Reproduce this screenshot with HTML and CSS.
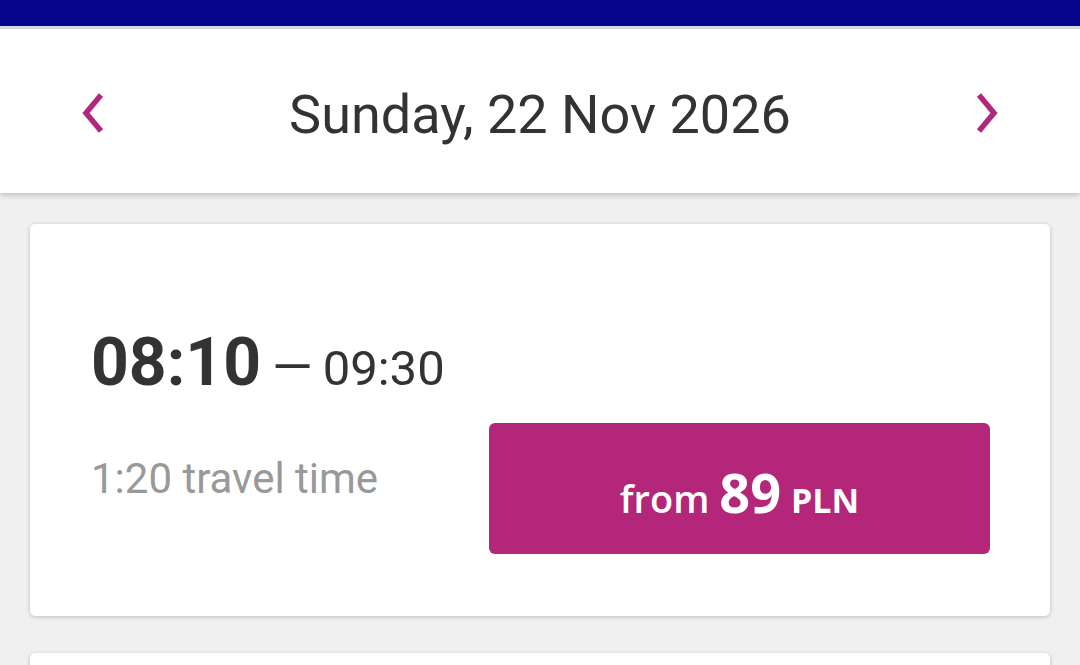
FILE: index.html
```html
<!DOCTYPE html>
<html>
<head>
<meta charset="utf-8">
<title>Connections</title>
<link rel="stylesheet" href="styles.css">
</head>
<body>

<div class="topbar"></div>

<div class="dayhead">
	<button class="nav prev" aria-label="previous day">
		<svg width="26" height="44" viewBox="0 0 26 44"><path d="M21 4 L6 22 L21 40" fill="none" stroke="#b0287e" stroke-width="5.5"/></svg>
	</button>
	<div class="date">Sunday, 22 Nov 2026</div>
	<button class="nav next" aria-label="next day">
		<svg width="26" height="44" viewBox="0 0 26 44"><path d="M5 4 L20 22 L5 40" fill="none" stroke="#b0287e" stroke-width="5.5"/></svg>
	</button>
</div>

<div id="main">
	<div class="trip">
		<div class="times"><span class="dep">08:10</span><span class="dash">—</span><span class="arr">09:30</span></div>
		<div class="row">
			<div class="dur">1:20 travel time</div>
			<button class="price">from <b>89</b> <span class="cur">PLN</span></button>
		</div>
	</div>
	<div class="trip"></div>
</div>

</body>
</html>
```

FILE: styles.css
```css
body {
	margin: 0;
	background-color: #f0f0f0;
	font-family: Roboto, "Liberation Sans", sans-serif;
	color: #333;
	overflow: hidden;
}
.topbar {
	height: 26px;
	background-color: #05058a;
	border-bottom: 3px solid #dcdcea;
}
.dayhead {
	height: 164px;
	background-color: #fff;
	display: flex;
	align-items: center;
	justify-content: space-between;
	padding: 0 80px 0 80px;
	box-shadow: 0 2px 6px rgba(0, 0, 0, .22);
	position: relative;
}
.nav {
	border: none;
	background: none;
	padding: 0;
	width: 26px;
	height: 44px;
	margin-top: 4px;
}
.nav svg {
	display: block;
}
.date {
	font-size: 54px;
	padding-top: 7px;
}
#main {
	padding: 31px 30px;
}
.trip {
	background-color: #fff;
	border-radius: 5px;
	box-shadow: 0 1px 4px rgba(0, 0, 0, .22);
	padding: 104px 60px 62px 61px;
	margin-bottom: 37px;
}
.times {
	line-height: 70px;
	white-space: nowrap;
}
.dep {
	font-size: 66px;
	font-weight: bold;
}
.dash {
	font-size: 52px;
	margin: 0 10px 0 11px;
}
.arr {
	font-size: 49px;
}
.row {
	display: flex;
	align-items: center;
	justify-content: space-between;
	margin-top: 8px;
}
.dur {
	font-size: 42px;
	color: #999;
	line-height: 42px;
	padding-bottom: 19px;
}
.price {
	width: 501px;
	height: 131px;
	border: none;
	border-radius: 6px;
	background-color: #b3267a;
	color: #fff;
	font-family: "Open Sans", "Liberation Sans", sans-serif;
	font-weight: 600;
	font-size: 38px;
	line-height: 1;
	padding: 6px 0 0 0;
}
.price b {
	font-size: 54px;
	font-weight: 700;
}
.price .cur {
	font-size: 34px;
	font-weight: 700;
}
```
